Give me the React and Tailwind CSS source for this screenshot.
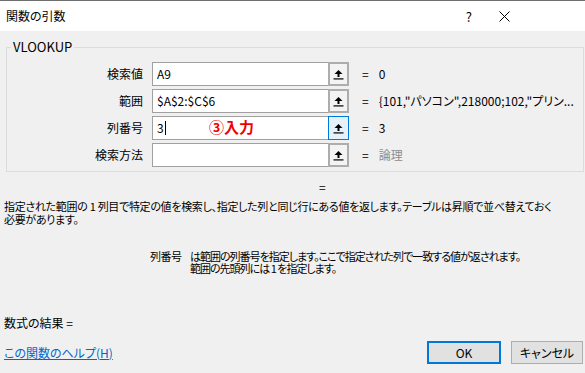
import React from "react";

const rows = [
  { label: "検索値", value: "A9", result: "0" },
  { label: "範囲", value: "$A$2:$C$6", result: '{101,"パソコン",218000;102,"プリン...' },
  { label: "列番号", value: "3", result: "3", active: true },
  { label: "検索方法", value: "", result: "論理", muted: true },
];

// 参照ボタンのアイコン（上向き矢印＋下線）
function RefIcon() {
  return (
    <svg width="11" height="11" viewBox="0 0 11 11">
      <path d="M5.5 1 L1.5 5 H4.5 V8 H6.5 V5 H9.5 Z" fill="#000" />
      <rect x="0.5" y="9.3" width="10" height="1.2" fill="#000" />
    </svg>
  );
}

function ArgRow({ label, value, result, active, muted }) {
  return (
    <div className="flex h-[24px] items-center">
      <div className="w-[136px] text-right text-[12px]">{label}</div>
      <div className="ml-[9px] flex h-full w-[197px]">
        <div className="relative flex flex-1 items-center border border-r-0 border-[#a0a0a0] bg-white pl-[4px] text-[12px]">
          {value}
          {active && (
            <>
              <span className="ml-[1px] h-[14px] w-[1px] bg-black" />
              <span className="absolute left-[56px] top-[2px] text-[15px] font-bold text-[#f00000]">
                ③入力
              </span>
            </>
          )}
        </div>
        {active ? (
          <div className="flex w-[21px] items-center justify-center border border-[#0078d7] bg-[#e5f1fb]">
            <RefIcon />
          </div>
        ) : (
          <div className="flex w-[21px] items-center justify-center border-2 border-[#adadad] bg-[#f3f3f3]">
            <RefIcon />
          </div>
        )}
      </div>
      <span className="ml-[13px] text-[12px]">=</span>
      <span
        className={
          muted
            ? "ml-[10px] whitespace-nowrap text-[12px] text-[#8c8c8c]"
            : "ml-[10px] whitespace-nowrap text-[12px] text-black"
        }
      >
        {result}
      </span>
    </div>
  );
}

export default function App() {
  return (
    <div className="flex h-[373px] w-[585px] flex-col overflow-hidden bg-[#f0f0f0] font-['Noto_Sans_CJK_JP','Noto_Sans',sans-serif] leading-none text-black [font-feature-settings:'palt']">
      {/* タイトルバー */}
      <div className="flex h-[31px] items-center border-t border-[#6f6f6f] bg-white pl-[6px] pr-[75px]">
        <span className="text-[12px]">関数の引数</span>
        <span className="ml-auto text-[13px]">?</span>
        <svg className="ml-[27px]" width="11" height="11" viewBox="0 0 11 11">
          <path d="M0.5 0.5 L10.5 10.5 M10.5 0.5 L0.5 10.5" stroke="#000" strokeWidth="1" />
        </svg>
      </div>

      {/* 引数グループ */}
      <div className="relative ml-[6px] mr-[1px] mt-[16px] border border-[#dcdcdc] pb-[4px] pt-[14px]">
        <span className="absolute -top-[8px] left-[4px] bg-[#f0f0f0] px-[2px] text-[13px]">VLOOKUP</span>
        <div className="flex flex-col gap-[3px]">
          {rows.map((r) => (
            <ArgRow key={r.label} {...r} />
          ))}
        </div>
      </div>

      <div className="mt-[8px] pl-[319px] text-[12px] leading-[14px]">=</div>

      <div className="mt-[6px] px-[4px] text-[11px] leading-[13px] tracking-[-0.3px]">
        <p className="whitespace-nowrap">
          指定された範囲の 1 列目で特定の値を検索し、指定した列と同じ行にある値を返します。テーブルは昇順で並べ替えておく
        </p>
        <p className="whitespace-nowrap">必要があります。</p>
      </div>

      <div className="mt-[24px] flex pl-[150px] text-[11px] leading-[12px]">
        <span className="w-[40px] tracking-[-0.5px]">列番号</span>
        <div className="tracking-[-1px]">
          <p className="whitespace-nowrap">は範囲の列番号を指定します。ここで指定された列で一致する値が返されます。</p>
          <p className="whitespace-nowrap">範囲の先頭列には 1 を指定します。</p>
        </div>
      </div>

      <div className="mt-[43px] pl-[4px] text-[12px] leading-[12px]">数式の結果 =</div>

      <div className="mt-auto mb-[9px] flex h-[23px] items-center pl-[4px] pr-[2px]">
        <a className="text-[12px] text-[#0066cc] underline">この関数のヘルプ(H)</a>
        <button className="ml-auto h-[23px] w-[74px] border-2 border-[#0078d7] bg-[#e1e1e1] text-[12px]">
          OK
        </button>
        <button className="ml-[10px] h-[23px] w-[72px] border border-[#adadad] bg-[#e1e1e1] text-[12px]">
          キャンセル
        </button>
      </div>
    </div>
  );
}
